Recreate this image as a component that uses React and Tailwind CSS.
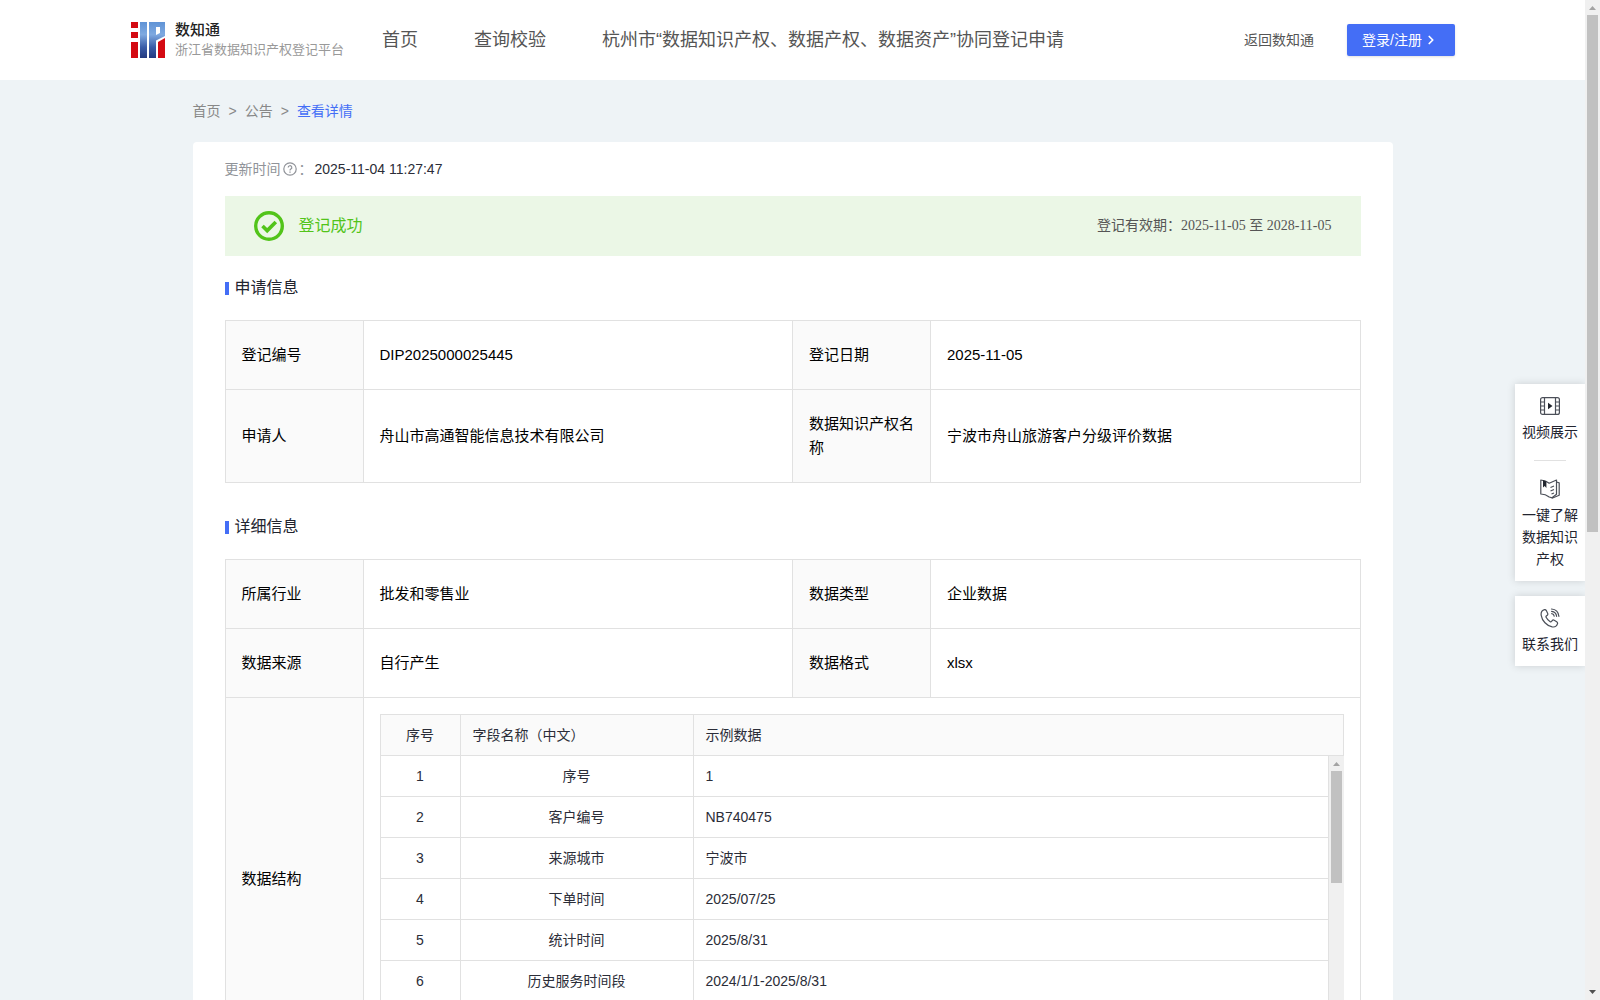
import { ChevronRight } from 'lucide-react';

const navItems = ['首页', '查询校验', '杭州市“数据知识产权、数据产权、数据资产”协同登记申请'];

const applyInfo = [
  ['登记编号', 'DIP2025000025445', '登记日期', '2025-11-05'],
  ['申请人', '舟山市高通智能信息技术有限公司', '数据知识产权名称', '宁波市舟山旅游客户分级评价数据'],
];

const detailInfo = [
  ['所属行业', '批发和零售业', '数据类型', '企业数据'],
  ['数据来源', '自行产生', '数据格式', 'xlsx'],
];

const fields = [
  { name: '序号', sample: '1' },
  { name: '客户编号', sample: 'NB740475' },
  { name: '来源城市', sample: '宁波市' },
  { name: '下单时间', sample: '2025/07/25' },
  { name: '统计时间', sample: '2025/8/31' },
  { name: '历史服务时间段', sample: '2024/1/1-2025/8/31' },
];

const Logo = () => (
  <svg className="w-[34px] h-9" viewBox="0 0 34 36">
    <defs>
      <linearGradient id="logoBlue" gradientUnits="userSpaceOnUse" x1="0" y1="0" x2="0" y2="36">
        <stop offset="0" stopColor="#5f93d6" />
        <stop offset="0.35" stopColor="#7fa9e0" />
        <stop offset="0.7" stopColor="#3a5ca8" />
        <stop offset="1" stopColor="#243a80" />
      </linearGradient>
    </defs>
    <path fill="#d40a12" d="M0 0h7v6H0zM0 10h7v6H0zM0 20h7v16H0zM27 20l7-4v20h-7z" />
    <path fill="url(#logoBlue)" d="M9 0h7v36H9z" />
    <path fill="url(#logoBlue)" fillRule="evenodd" d="M18 0h16v14l-9 4.500v17.500h-7zM25 5v8l4-2V5z" />
  </svg>
);

const HelpIcon = () => (
  <svg className="w-[14px] h-[14px]" viewBox="0 0 14 14" fill="none" stroke="#909399">
    <circle cx="7" cy="7" r="6.200" strokeWidth="1.200" />
    <path d="M5.200 5.600a1.800 1.800 0 1 1 2.700 1.500c-.6.400-.9.600-.9 1.300" strokeWidth="1.200" />
    <path d="M7 9.400v1.300" strokeWidth="1.300" />
  </svg>
);

const SuccessIcon = () => (
  <svg className="w-[30px] h-[30px]" viewBox="0 0 30 30" fill="none" stroke="#52c41a">
    <circle cx="15" cy="15" r="13.300" strokeWidth="3.400" />
    <path d="M8.500 15l4.700 4.600 8.600-8.600" strokeWidth="3.600" />
  </svg>
);

const VideoIcon = () => (
  <svg className="w-5 h-[18px]" viewBox="0 0 20 18" fill="none" stroke="#4b4f58" strokeWidth="1.200">
    <rect x="0.600" y="0.600" width="18.800" height="16.800" rx="2" />
    <path d="M4.500 1v16M15.500 1v16M1 5h3.500M1 9h3.500M1 13h3.500M15.500 5H19M15.500 9H19M15.500 13H19" />
    <path d="M8 5.800v6.400L12.500 9z" fill="#22262e" stroke="none" />
  </svg>
);

const BookIcon = () => (
  <svg className="w-5 h-5" viewBox="0 0 20 20" fill="none" stroke="#4b4f58" strokeWidth="1.200" strokeLinejoin="round">
    <path d="M.8 1c3 .2 6 1.200 8.400 3.200L16.500 1v14.200L12 18.800 9.200 18C7 16.200 4 15 .8 15z" />
    <path d="M16.500 3l2.700.8v12.400L12 19.200" />
    <path d="M10.500 8.500l3.500-1.500M10.500 12l3.500-1.500M11.500 15l2.500-1" />
    <path d="M3 1v7.500l1.700-1.400L6.400 9V2.400z" fill="#22262e" stroke="none" />
  </svg>
);

const PhoneIcon = () => (
  <svg className="w-5 h-5" viewBox="0 0 20 20" fill="none" stroke="#4b4f58" strokeWidth="1.200" strokeLinejoin="round" strokeLinecap="round">
    <path d="M4.600 1.700C2 2.400.8 4.700 1.200 7.300c.8 5.400 5.600 10.600 11 11.600 2.500.4 4.600-.8 5.300-3.200.3-.9-.1-1.500-.8-2l-2.500-1.500c-.7-.4-1.400-.3-1.900.3l-.8 1c-.4.500-.8.500-1.300.200-1.800-1.100-3.200-2.600-4.100-4.400-.3-.5-.2-.9.200-1.300l1-.8c.6-.5.7-1.100.3-1.900L6.300 2.600c-.4-.7-1-1.100-1.700-.9z" />
    <path d="M11.500 1c4 .3 7 3.200 7.400 7.300M11.600 3.300c2.800.3 4.700 2.200 5 5M11.700 5.700c1.400.2 2.300 1.100 2.500 2.500" />
  </svg>
);

const SectionTitle = ({ children }) => (
  <div className="flex items-center">
    <span className="w-1 h-[13px] mt-px mr-1.5 bg-[#446ef6]" />
    <h2 className="text-base leading-6 text-[#22242f]">{children}</h2>
  </div>
);

const InfoRow = ({ row }) => (
  <tr>
    <th className="px-4 py-[22px] border border-[#e1e1e1] bg-[#fafafa] text-left font-normal">{row[0]}</th>
    <td className="px-4 py-[22px] border border-[#e1e1e1]">{row[1]}</td>
    <th className="px-4 py-[22px] border border-[#e1e1e1] bg-[#fafafa] text-left font-normal">{row[2]}</th>
    <td className="px-4 py-[22px] border border-[#e1e1e1]">{row[3]}</td>
  </tr>
);

const InfoTable = ({ rows, children }) => (
  <table className="w-full table-fixed border-collapse text-[15px] leading-6 text-black">
    <colgroup>
      <col className="w-[138px]" />
      <col />
      <col className="w-[138px]" />
      <col />
    </colgroup>
    <tbody>
      {rows.map((row) => (
        <InfoRow key={row[0]} row={row} />
      ))}
      {children}
    </tbody>
  </table>
);

const FieldCols = () => (
  <colgroup>
    <col className="w-20" />
    <col className="w-[233px]" />
    <col />
  </colgroup>
);

const FieldTable = () => (
  <div className="text-sm leading-5 text-[#2b2d38]">
    <table className="w-full table-fixed border-separate border-spacing-0 border-t border-l border-[#e1e1e1]">
      <FieldCols />
      <thead>
        <tr className="h-[41px] bg-[#fafafa]">
          <th className="px-3 border-r border-b border-[#e1e1e1] font-normal">序号</th>
          <th className="px-3 border-r border-b border-[#e1e1e1] font-normal text-left">字段名称（中文）</th>
          <th className="px-3 border-r border-b border-[#e1e1e1] font-normal text-left">示例数据</th>
        </tr>
      </thead>
    </table>
    <div className="flex h-[287px] overflow-hidden">
      <div className="flex-1 min-w-0">
        <table className="w-full table-fixed border-separate border-spacing-0 border-l border-[#e1e1e1]">
          <FieldCols />
          <tbody>
            {fields.map((field, index) => (
              <tr key={field.name} className="h-[41px]">
                <td className="px-3 border-r border-b border-[#e1e1e1] text-center">{index + 1}</td>
                <td className="px-3 border-r border-b border-[#e1e1e1] text-center">{field.name}</td>
                <td className="px-3 border-r border-b border-[#e1e1e1]">{field.sample}</td>
              </tr>
            ))}
          </tbody>
        </table>
      </div>
      <div className="flex flex-col w-[15px] px-0.5 bg-[#f0f0f0]">
        <ScrollArrow />
        <div className="h-28 bg-[#c1c1c1]" />
      </div>
    </div>
  </div>
);

const ScrollArrow = ({ down }) => (
  <svg className="w-[11px] h-[15px] shrink-0" viewBox="0 0 11 15">
    {down ? <path d="M2 5h7L5.500 9z" fill="#505050" /> : <path d="M2 10h7L5.500 6z" fill="#a3a3a3" />}
  </svg>
);

const App = () => {
  return (
    <div className="flex h-screen overflow-hidden font-['Liberation_Sans','Noto_Sans_CJK_SC',sans-serif]">
      <div className="relative flex-1 min-w-0 overflow-hidden bg-[#eef3f6]">
        {/* Header */}
        <header className="flex items-center h-20 pl-[131px] pr-[130px] bg-white whitespace-nowrap">
          <a href="#" className="flex items-center w-[251px] shrink-0">
            <Logo />
            <div className="ml-2.5">
              <div className="text-[15px] leading-5 font-medium text-[#222]">数知通</div>
              <div className="text-[13px] leading-5 text-[#999]">浙江省数据知识产权登记平台</div>
            </div>
          </a>
          <nav className="flex gap-14 text-lg leading-6 text-[#555]">
            {navItems.map((item) => (
              <a key={item} href="#">{item}</a>
            ))}
          </nav>
          <a href="#" className="ml-auto mr-[33px] text-sm text-[#555]">返回数知通</a>
          <button className="flex items-center w-[108px] h-8 pl-[15px] rounded-xs bg-[#446ef6] text-sm text-white shadow-sm">
            登录/注册
            <ChevronRight className="w-[14px] h-[14px] ml-0.5" strokeWidth={3} />
          </button>
        </header>

        <main className="max-w-[1200px] mx-auto">
          {/* Breadcrumb */}
          <div className="flex gap-2 py-[21px] text-sm leading-5 text-[#888]">
            <a href="#">首页</a>
            <span>&gt;</span>
            <a href="#">公告</a>
            <span>&gt;</span>
            <a href="#" className="text-[#446ef6]">查看详情</a>
          </div>

          <div className="px-8 pt-4 pb-8 rounded-sm bg-white">
            <div className="flex items-center text-sm leading-[22px] text-[#909399]">
              更新时间
              <span className="mx-0.5"><HelpIcon /></span>
              ：
              <span className="ml-0.5 text-[#2b2d38]">2025-11-04 11:27:47</span>
            </div>

            <div className="flex items-center h-[60px] mt-4 px-[29px] bg-[#ebf7e6]">
              <SuccessIcon />
              <span className="ml-[15px] text-base text-[#52c41a]">登记成功</span>
              <span className="ml-auto text-sm text-[#555] font-['Liberation_Serif','Noto_Sans_CJK_SC',serif]">
                登记有效期：2025-11-05 至 2028-11-05
              </span>
            </div>

            <div className="mt-5 mb-5">
              <SectionTitle>申请信息</SectionTitle>
            </div>
            <InfoTable rows={applyInfo} />

            <div className="mt-8 mb-5">
              <SectionTitle>详细信息</SectionTitle>
            </div>
            <InfoTable rows={detailInfo}>
              <tr>
                <th className="px-4 border border-[#e1e1e1] bg-[#fafafa] text-left font-normal">数据结构</th>
                <td colSpan={3} className="p-4 border border-[#e1e1e1]">
                  <FieldTable />
                </td>
              </tr>
            </InfoTable>
          </div>
        </main>

        {/* Floating shortcuts */}
        <aside className="absolute right-0 top-96 flex flex-col gap-[15px] w-[70px] text-sm leading-[22px] text-center text-[#22242f]">
          <div className="flex flex-col items-center pt-[13px] pb-[11px] px-1.5 bg-white shadow-[0_0_8px_rgba(0,0,0,0.15)]">
            <a href="#" className="flex flex-col items-center gap-1.5">
              <VideoIcon />
              视频展示
            </a>
            <div className="w-8 h-px mt-[17px] mb-[18px] bg-[#e1e1e1]" />
            <a href="#" className="flex flex-col items-center gap-[5px]">
              <BookIcon />
              一键了解数据知识产权
            </a>
          </div>
          <a href="#" className="flex flex-col items-center gap-[5px] pt-3 pb-[11px] bg-white shadow-[0_0_8px_rgba(0,0,0,0.15)]">
            <PhoneIcon />
            联系我们
          </a>
        </aside>
      </div>

      {/* Page scrollbar */}
      <div className="flex flex-col w-[15px] px-0.5 bg-[#f0f0f0]">
        <ScrollArrow />
        <div className="flex-1">
          <div className="h-8/15 bg-[#c1c1c1]" />
        </div>
        <ScrollArrow down />
      </div>
    </div>
  );
};

export default App;
